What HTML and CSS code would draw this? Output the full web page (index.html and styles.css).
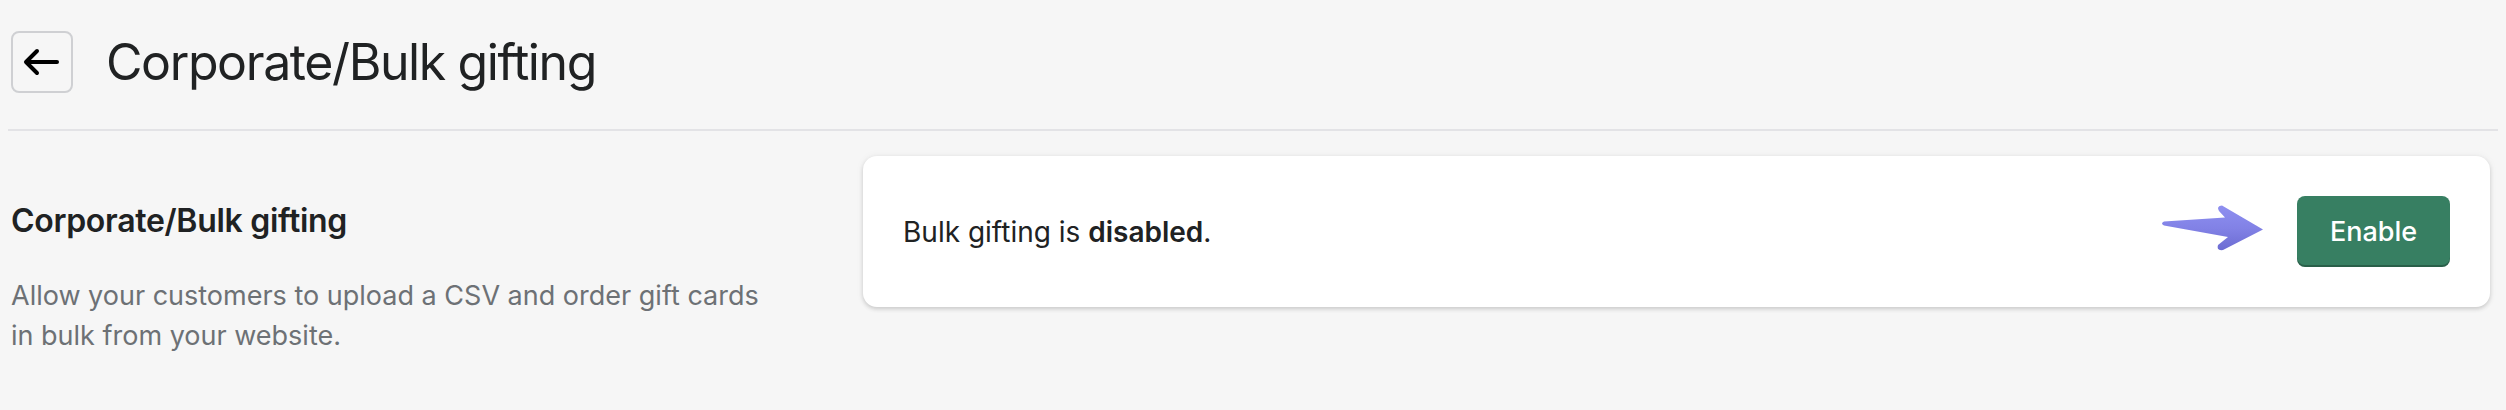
FILE: index.html
```html
<!DOCTYPE html>
<html lang="en">
<head>
<meta charset="utf-8">
<title>Corporate/Bulk gifting</title>
<link rel="stylesheet" href="styles.css">
</head>
<body>
<div class="page">
  <header class="header">
    <button class="back" aria-label="Back">
      <svg width="62" height="62" viewBox="0 0 62 62" fill="none" stroke="#000" stroke-width="4" stroke-linecap="round" stroke-linejoin="round">
        <path d="M16 31 H46"/>
        <path d="M26 20 L15 31 L26 42"/>
      </svg>
    </button>
    <h1 class="title">Corporate/Bulk gifting</h1>
  </header>
  <div class="divider"></div>
  <section class="section">
    <div class="aside">
      <h2 class="aside-title">Corporate/Bulk gifting</h2>
      <p class="aside-desc">Allow your customers to upload a CSV and order gift cards in bulk from your website.</p>
    </div>
    <div class="card">
      <p class="card-text">Bulk gifting is <strong>disabled</strong>.</p>
      <div class="actions">
        <svg class="pointer" width="112" height="60" viewBox="0 0 112 60">
          <defs>
            <linearGradient id="ag" x1="0" y1="0" x2="0" y2="1">
              <stop offset="0" stop-color="#8e8ff0"/>
              <stop offset="0.5" stop-color="#8282e6"/>
              <stop offset="1" stop-color="#6c6cd2"/>
            </linearGradient>
          </defs>
          <path d="M9 19.5 L70 15.5 L64 9 Q61 4 67 3.5 L108 27.5 L68 48 Q61 49 63 43 L73 35 L9 23.5 Q5 21.5 9 19.5 Z" fill="url(#ag)"/>
        </svg>
        <button class="primary">Enable</button>
      </div>
    </div>
  </section>
</div>
</body>
</html>
```

FILE: styles.css
```css
* { box-sizing: border-box; }

html, body {
  margin: 0;
  background: #f6f6f6;
}

body {
  font-family: Inter, "Noto Sans", "Liberation Sans", sans-serif;
  color: #202223;
}

.page {
  padding: 31px 8px 0;
}

.header {
  display: flex;
  align-items: center;
  gap: 33px;
  padding-left: 3px;
  height: 62px;
}

.back {
  width: 62px;
  height: 62px;
  padding: 0;
  border: 2px solid #cfd0d3;
  border-radius: 8px;
  background: transparent;
  display: flex;
  align-items: center;
  justify-content: center;
}

.back svg {
  display: block;
  margin: -2px;
}

.title {
  margin: 0;
  font-size: 50px;
  font-weight: 400;
  line-height: 62px;
  letter-spacing: -1.4px;
  color: #202223;
}

.divider {
  margin-top: 36px;
  height: 2px;
  background: #e3e3e6;
}

.section {
  display: grid;
  grid-template-columns: 820px 1fr;
  column-gap: 32px;
  padding: 25px 8px 0 3px;
  align-items: start;
}

.aside {
  padding-top: 45px;
}

.aside-title {
  margin: 0;
  font-size: 32px;
  font-weight: 600;
  line-height: 40px;
  letter-spacing: -0.3px;
}

.aside-desc {
  margin: 35px 0 0;
  max-width: 768px;
  font-size: 27px;
  line-height: 40px;
  color: #6d7175;
}

.card {
  background: #fff;
  border-radius: 14px;
  box-shadow: 0 0 8px rgba(23, 24, 24, 0.05), 0 2px 4px rgba(0, 0, 0, 0.16);
  padding: 40px;
  display: flex;
  align-items: center;
  justify-content: space-between;
}

.card-text {
  margin: 0;
  font-size: 28px;
  line-height: 40px;
}

.card-text strong {
  font-weight: 600;
}

.actions {
  display: flex;
  align-items: center;
  gap: 30px;
}

.pointer {
  display: block;
}

.primary {
  width: 153px;
  height: 71px;
  border: none;
  border-radius: 8px;
  background: #377f62;
  box-shadow: inset 0 -2px 0 rgba(0, 0, 0, 0.25);
  color: #fff;
  font-family: inherit;
  font-size: 27px;
  font-weight: 500;
  padding: 0;
}
```
